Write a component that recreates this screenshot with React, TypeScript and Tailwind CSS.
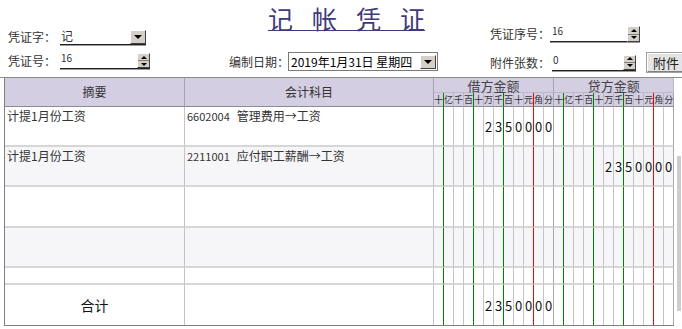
import React from 'react';

const digitLabels = ['十', '亿', '千', '百', '十', '万', '千', '百', '十', '元', '角', '分'];

// right-hand rule of each amount column: g = green group line, r = red yuan line, e = end of block
const ruleKinds = ['g', 'n', 'n', 'g', 'n', 'n', 'g', 'n', 'n', 'r', 'n', 'e'];

const ruleClass: Record<string, string> = {
  g: 'border-r border-r-[#008000]',
  r: 'border-r border-r-[#ff0000]',
  n: 'border-r border-r-[#c4c4c4]',
  e: 'border-r border-r-[#a8a8a8]',
};

const headRuleClass: Record<string, string> = {
  g: 'border-r border-r-[#008000]',
  r: 'border-r border-r-[#ff0000]',
  n: 'border-r border-r-[#b9b4c9]',
  e: 'border-r border-r-[#a6a2b6]',
};

type Row = {
  summary: string;
  code: string;
  account: string;
  debit: string;
  credit: string;
  h: string;
  bg: string;
};

const rows: Row[] = [
  { summary: '计提1月份工资', code: '6602004', account: '管理费用→工资', debit: '2350000', credit: '', h: 'h-[40px]', bg: 'bg-white' },
  { summary: '计提1月份工资', code: '2211001', account: '应付职工薪酬→工资', debit: '', credit: '2350000', h: 'h-[40px]', bg: 'bg-[#f6f6f8]' },
  { summary: '', code: '', account: '', debit: '', credit: '', h: 'h-[41px]', bg: 'bg-white' },
  { summary: '', code: '', account: '', debit: '', credit: '', h: 'h-[40px]', bg: 'bg-[#f6f6f8]' },
  { summary: '', code: '', account: '', debit: '', credit: '', h: 'h-[17px]', bg: 'bg-white' },
];

const toCells = (amount: string) => {
  const cells: string[] = Array(12).fill('');
  const chars = amount.split('');
  chars.forEach((c, i) => {
    cells[12 - chars.length + i] = c;
  });
  return cells;
};

const DropBtn = () => (
  <span className="flex h-[14px] w-[16px] shrink-0 items-center justify-center border border-t-white border-l-white border-r-[#404040] border-b-[#404040] bg-[#d4d0c8]">
    <span className="h-0 w-0 border-x-[4px] border-t-[4px] border-x-transparent border-t-black" />
  </span>
);

const Spinner = ({ h = 'h-[16px]' }: { h?: string }) => (
  <span className={`flex ${h} w-[13px] shrink-0 flex-col border border-t-white border-l-white border-r-[#404040] border-b-[#404040] bg-[#d4d0c8]`}>
    <span className="flex flex-1 items-center justify-center border-b border-b-[#808080]">
      <span className="h-0 w-0 border-x-[3px] border-b-[3px] border-x-transparent border-b-black" />
    </span>
    <span className="flex flex-1 items-center justify-center">
      <span className="h-0 w-0 border-x-[3px] border-t-[3px] border-x-transparent border-t-black" />
    </span>
  </span>
);

const AmountCells = ({ amount, bottom }: { amount: string; bottom: string }) => (
  <>
    {toCells(amount).map((d, i) => (
      <td
        key={i}
        className={`${ruleClass[ruleKinds[i]]} ${bottom} p-0 text-center align-middle text-[13px] leading-none text-[#111]`}
      >
        {d}
      </td>
    ))}
  </>
);

export default function App() {
  return (
    <div
      className="h-[329px] w-[682px] overflow-hidden bg-white text-[12px] text-[#333]"
      style={{ fontFamily: '"Noto Sans CJK SC", "Noto Sans", sans-serif' }}
    >
      {/* Form header */}
      <div className="flex h-[77px] overflow-hidden">
        <div className="w-[212px] shrink-0 pl-[8px] pt-[29px]">
          <div className="flex h-[16px] items-center">
            <span className="w-[52px] whitespace-nowrap leading-none">凭证字：</span>
            <div className="flex h-[16px] w-[86px] items-start justify-between border-b border-b-[#222] shadow-[0_1px_0_#9a9a9a]">
              <span className="pl-[1px] leading-[13px]">记</span>
              <span className="pt-[1px]">
                <DropBtn />
              </span>
            </div>
          </div>
          <div className="mt-[8px] flex h-[16px] items-center">
            <span className="w-[52px] whitespace-nowrap leading-none">凭证号：</span>
            <div className="flex h-[16px] w-[90px] items-start justify-between border-b border-b-[#222] shadow-[0_1px_0_#9a9a9a]">
              <span className="pl-[1px] text-[10px] leading-[10px]">16</span>
              <Spinner h="h-[15px]" />
            </div>
          </div>
        </div>

        <div className="w-[270px] shrink-0">
          <div className="pl-[56px]">
            <span className="whitespace-nowrap text-[25px] leading-[36px] text-[#3f3a7a] underline decoration-[#3f3a7a] decoration-1 underline-offset-[1px]">
              <span className="tracking-[19px]">记帐凭</span>证
            </span>
          </div>
          <div className="mt-[16px] flex items-center pl-[17px]">
            <span className="w-[59px] whitespace-nowrap">编制日期：</span>
            <div className="flex h-[19px] w-[150px] items-center justify-between border border-[#7a7a7a] pl-[2px] pr-[1px] text-black">
              <span className="whitespace-nowrap leading-none">2019年1月31日 星期四</span>
              <DropBtn />
            </div>
          </div>
        </div>

        <div className="w-[200px] shrink-0 pl-[8px] pt-[26px]">
          <div className="flex h-[16px] items-center">
            <span className="w-[60px] whitespace-nowrap leading-none">凭证序号：</span>
            <div className="flex h-[16px] w-[90px] items-start justify-between border-b border-b-[#222] shadow-[0_1px_0_#9a9a9a]">
              <span className="pl-[2px] text-[10px] leading-[10px]">16</span>
              <Spinner />
            </div>
          </div>
          <div className="mt-[11px] flex h-[19px] items-center">
            <span className="w-[62px] shrink-0 whitespace-nowrap leading-none">附件张数：</span>
            <div className="flex h-[16px] w-[84px] shrink-0 items-start justify-between border-b border-b-[#222] shadow-[0_1px_0_#9a9a9a]">
              <span className="pl-[1px] text-[10px] leading-[10px]">0</span>
              <Spinner h="h-[15px]" />
            </div>
            <button className="ml-[11px] flex h-[19px] w-[48px] shrink-0 items-center border border-t-white border-l-white border-r-[#808080] border-b-[#808080] bg-[#e4e4e4] pl-[5px] text-[13px] leading-none text-[#222] outline outline-1 outline-[#a0a0a0]">
              附件
            </button>
          </div>
        </div>
      </div>

      {/* Voucher grid */}
      <div className="flex border-t border-t-[#8c8c8c]">
        <div className="ml-[4px] shrink-0 border-b border-l border-[#808080]">
          <table className="w-[669px] table-fixed border-separate border-spacing-0">
            <colgroup>
              <col className="w-[180px]" />
              <col className="w-[249px]" />
              {digitLabels.map((_, i) => (
                <col key={`d${i}`} className="w-[10px]" />
              ))}
              {digitLabels.map((_, i) => (
                <col key={`c${i}`} className="w-[10px]" />
              ))}
            </colgroup>
            <thead>
              <tr className="bg-[#d4cee3]">
                <th
                  rowSpan={2}
                  className="border-r border-b border-r-[#a6a2b6] border-b-[#8c8c8c] p-0 font-normal text-[#333]"
                >
                  摘要
                </th>
                <th
                  rowSpan={2}
                  className="border-r border-b border-r-[#a6a2b6] border-b-[#8c8c8c] p-0 font-normal text-[#333]"
                >
                  会计科目
                </th>
                <th
                  colSpan={12}
                  className="h-[15px] border-r border-b border-r-[#a6a2b6] border-b-[#bcb7cc] p-0 text-[13px] font-normal leading-none text-[#444]"
                >
                  借方金额
                </th>
                <th
                  colSpan={12}
                  className="h-[15px] border-r border-b border-r-[#bcb7cc] border-b-[#bcb7cc] p-0 text-[13px] font-normal leading-none text-[#444]"
                >
                  贷方金额
                </th>
              </tr>
              <tr className="bg-[#d4cee3]">
                {[...digitLabels, ...digitLabels].map((d, i) => (
                  <th
                    key={`h${i}`}
                    className={`${headRuleClass[ruleKinds[i % 12]]} h-[14px] whitespace-nowrap border-b border-b-[#8c8c8c] p-0 text-center text-[9px] font-normal leading-none text-[#333]`}
                  >
                    {d}
                  </th>
                ))}
              </tr>
            </thead>
            <tbody>
              {rows.map((r, idx) => (
                <tr key={idx} className={`${r.bg} ${r.h}`}>
                  <td className="border-r border-b-2 border-r-[#c4c4c4] border-b-[#d6d6d6] p-0 pl-[2px] pt-[2px] align-top leading-[14px]">
                    {r.summary}
                  </td>
                  <td className="border-r border-b-2 border-r-[#c4c4c4] border-b-[#d6d6d6] p-0 pl-[2px] pt-[2px] align-top leading-[14px]">
                    {r.code && (
                      <>
                        <span className="text-[11px]">{r.code}</span>
                        <span className="ml-[7px]">{r.account}</span>
                      </>
                    )}
                  </td>
                  <AmountCells amount={r.debit} bottom="border-b-2 border-b-[#d6d6d6]" />
                  <AmountCells amount={r.credit} bottom="border-b-2 border-b-[#d6d6d6]" />
                </tr>
              ))}
              <tr className="h-[40px] bg-white">
                <td className="border-r border-r-[#c4c4c4] p-0 text-center align-middle text-[14px] text-[#111]">
                  合计
                </td>
                <td className="border-r border-r-[#c4c4c4] p-0" />
                <AmountCells amount="2350000" bottom="" />
                <AmountCells amount="" bottom="" />
              </tr>
            </tbody>
          </table>
        </div>
        {/* scrollbar */}
        <div className="flex w-[8px] flex-col pl-[3px]">
          <div className="h-[78px]" />
          <div className="h-[155px] w-[4px] bg-[#cdcdcd]" />
        </div>
      </div>
    </div>
  );
}
